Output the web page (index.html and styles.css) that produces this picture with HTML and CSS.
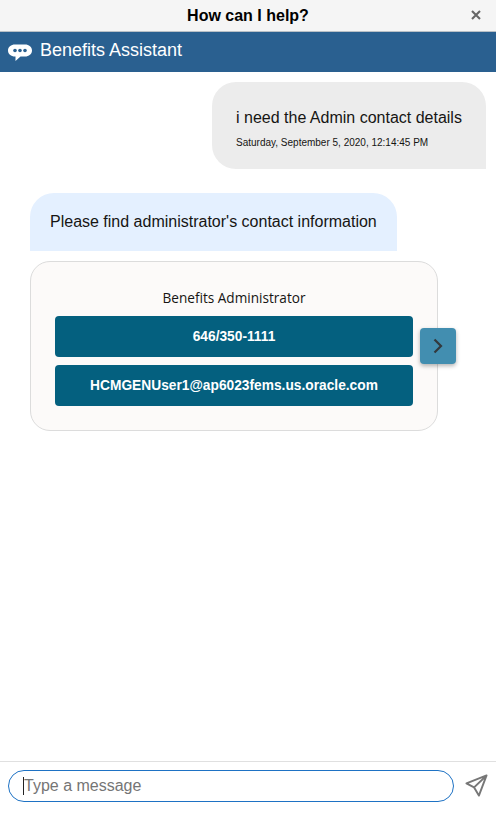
FILE: index.html
```html
<!DOCTYPE html>
<html lang="en">
<head>
    <meta charset="UTF-8">
    <meta name="viewport" content="width=device-width, initial-scale=1.0">
    <title>Benefits Assistant</title>
    <link rel="stylesheet" href="styles.css">
</head>
<body>
    <div class="app-container">
        <!-- Title bar -->
        <div class="title-bar">
            <h1 class="title">How can I help?</h1>
            <svg class="close-icon" viewBox="0 0 10 10" width="10" height="10">
                <path d="M1 1 L9 9 M9 1 L1 9" stroke="#666" stroke-width="2.1" fill="none"/>
            </svg>
        </div>

        <!-- Header -->
        <div class="chat-header">
            <svg class="chat-icon" viewBox="0 0 24 18" width="24" height="18">
                <path d="M7 0.500 H17 C21 0.500 24 3 24 6.500 C24 10 21 12.500 17 12.500 H12.500 L7.500 17 L7.500 12.500 H7 C3 12.500 0 10 0 6.500 C0 3 3 0.500 7 0.500 Z" fill="#fff"/>
                <circle cx="7" cy="6.500" r="1.800" fill="#2a6090"/>
                <circle cx="12" cy="6.500" r="1.800" fill="#2a6090"/>
                <circle cx="17" cy="6.500" r="1.800" fill="#2a6090"/>
            </svg>
            <span class="chat-title">Benefits Assistant</span>
        </div>

        <!-- Messages -->
        <div class="messages">
            <div class="user-bubble">
                <p class="user-text">i need the Admin contact details</p>
                <p class="timestamp">Saturday, September 5, 2020, 12:14:45 PM</p>
            </div>

            <div class="bot-bubble">Please find administrator's contact information</div>

            <div class="card-row">
                <div class="card">
                    <div class="card-title">Benefits Administrator</div>
                    <button class="card-button">646/350-1111</button>
                    <button class="card-button">HCMGENUser1@ap6023fems.us.oracle.com</button>
                </div>
                <button class="next-button">
                    <svg viewBox="0 0 10 16" width="10" height="16">
                        <path d="M1.500 1.500 L8 8 L1.500 14.500" stroke="#33393d" stroke-width="2.200" fill="none"/>
                    </svg>
                </button>
            </div>
        </div>

        <!-- Input -->
        <div class="input-bar">
            <div class="input-box">
                <span class="caret"></span>
                <input type="text" class="message-input" placeholder="Type a message">
            </div>
            <svg class="send-icon" viewBox="0 0 24 24" width="23" height="23">
                <path d="M22.500 1.500 L1.500 9.800 L9.500 14 L14.500 22.500 Z M22.500 1.500 L9.500 14" stroke="#777" stroke-width="2" stroke-linejoin="round" fill="none"/>
            </svg>
        </div>
    </div>
</body>
</html>
```

FILE: styles.css
```css
* {
    margin: 0;
    padding: 0;
    box-sizing: border-box;
}

body {
    font-family: 'Liberation Sans', Arial, sans-serif;
    background: white;
    height: 100vh;
    overflow: hidden;
}

.app-container {
    display: flex;
    flex-direction: column;
    height: 100vh;
}

.title-bar {
    height: 32px;
    flex-shrink: 0;
    background: #f5f5f5;
    border-bottom: 1px solid #b9c0c6;
    display: flex;
    align-items: center;
    justify-content: center;
    position: relative;
}

.title {
    font-size: 16px;
    font-weight: bold;
    color: black;
}

.close-icon {
    position: absolute;
    top: 10px;
    right: 15px;
}

.chat-header {
    height: 40px;
    flex-shrink: 0;
    background: #2a6090;
    display: flex;
    align-items: center;
    gap: 8px;
    padding: 0 0 4px 8px;
}

.chat-icon {
    margin-top: 5px;
}

.chat-title {
    color: white;
    font-size: 18px;
}

.messages {
    flex: 1;
    display: flex;
    flex-direction: column;
    padding: 10px 10px 0 30px;
}

.user-bubble {
    align-self: flex-end;
    width: 274px;
    height: 87px;
    padding: 26px 0 0 24px;
    background: #ececec;
    border-radius: 24px 24px 0 24px;
}

.user-text {
    font-size: 16px;
    line-height: 19px;
    color: #161513;
}

.timestamp {
    font-size: 10px;
    line-height: 11px;
    margin-top: 10px;
    color: #161513;
}

.bot-bubble {
    align-self: flex-start;
    margin-top: 24px;
    width: 367px;
    height: 58px;
    padding: 20px 0 0 20px;
    background: #e4f0ff;
    border-radius: 24px 24px 0 0;
    font-size: 16px;
    line-height: 18px;
    color: #161513;
}

.card-row {
    display: flex;
    align-items: center;
    margin-top: 10px;
}

.card {
    width: 408px;
    height: 170px;
    padding: 26px 24px 0;
    background: #fcfaf9;
    border: 1px solid #dcdcdc;
    border-radius: 20px;
    display: flex;
    flex-direction: column;
}

.card-title {
    text-align: center;
    font-family: 'Open Sans', sans-serif;
    font-size: 13.6px;
    line-height: 19px;
    color: #161513;
    margin-bottom: 9px;
}

.card-button {
    height: 41px;
    flex-shrink: 0;
    margin-bottom: 8px;
    background: #04607f;
    border: none;
    border-radius: 4px;
    color: white;
    font-family: 'Liberation Sans', Arial, sans-serif;
    font-size: 13.75px;
    font-weight: bold;
}

.next-button {
    width: 36px;
    height: 36px;
    margin-left: -18px;
    background: #428eb0;
    border: none;
    border-radius: 4px;
    box-shadow: 0 2px 4px rgba(0, 0, 0, 0.3);
    display: flex;
    align-items: center;
    justify-content: center;
}

.input-bar {
    height: 61px;
    flex-shrink: 0;
    border-top: 1px solid #e0e0e0;
    display: flex;
    align-items: flex-start;
    padding: 8px 8px 0;
}

.input-box {
    width: 446px;
    height: 32px;
    border: 1px solid #1e72c4;
    border-radius: 16px;
    display: flex;
    align-items: center;
    padding-left: 14px;
}

.caret {
    width: 1px;
    height: 18px;
    background: #222;
    flex-shrink: 0;
}

.message-input {
    flex: 1;
    min-width: 0;
    border: none;
    outline: none;
    background: transparent;
    font-family: 'Liberation Sans', Arial, sans-serif;
    font-size: 16px;
}

.message-input::placeholder {
    color: #757575;
}

.send-icon {
    margin-left: 11px;
    margin-top: 4px;
}
```
